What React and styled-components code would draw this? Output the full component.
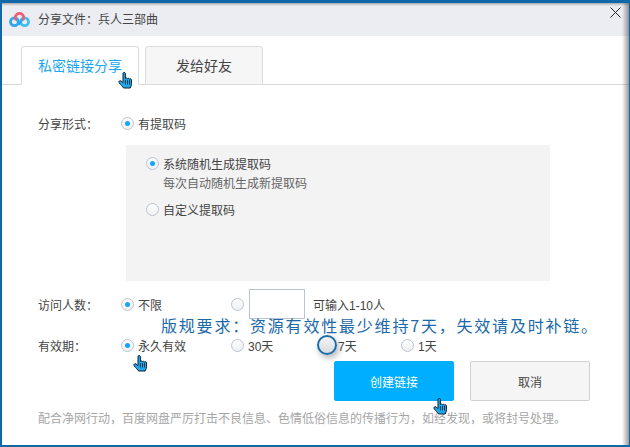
import React from 'react';
import styled, { createGlobalStyle } from 'styled-components';

const Global = createGlobalStyle`
  html, body { margin: 0; padding: 0; background: #fff; }
  #root { width: 630px; height: 447px; }
`;
const FONT = `"Noto Sans CJK SC", "Liberation Sans", sans-serif`;

const Win = styled.div`
  position: relative; width: 630px; height: 447px; box-sizing: border-box; overflow: hidden;
  background: #fff; font-family: "Liberation Sans", "Noto Sans CJK SC", sans-serif; font-size: 12px; color: #444;
  border-top: 3px solid #0f69a8; border-left: 2px solid #0f69a8; border-right: 1px solid #0f69a8; border-bottom: 2px solid #0f69a8;
  display: flex; flex-direction: column;
`;
const EdgeShade = styled.div`
  position: absolute; right: 0; top: 0; bottom: 0; width: 7px; pointer-events: none;
  background: linear-gradient(to right, rgba(80,80,80,0), rgba(70,70,70,.55));
`;
const TopShade = styled.div`
  position: absolute; left: 0; right: 0; top: 0; height: 3px; pointer-events: none;
  background: linear-gradient(to bottom, rgba(70,70,70,.4), rgba(70,70,70,0));
`;
const TitleBar = styled.div`
  height: 33px; flex: none; background: #ecedf2; display: flex; align-items: center; gap: 8px; padding: 0 8px 0 7px;
  font-size: 12px; color: #444;
`;
const TitleText = styled.span`padding-bottom: 2px;`;
const LogoMark = styled.svg`flex: none; margin-bottom: 1px;`;
const Close = styled.svg`margin-left: auto; margin-top: -15px;`;
const Tabs = styled.div`
  height: 39px; margin-top: 10px; flex: none; display: flex; gap: 6px; padding-left: 19px; border-bottom: 1px solid #d8d8d8; box-sizing: border-box;
`;
const Tab = styled.div`
  width: 118px; height: 39px; box-sizing: border-box; border: 1px solid #dcdcdc; border-radius: 3px 3px 0 0;
  display: flex; align-items: center; justify-content: center; font-size: 14px; padding-bottom: 2px;
  color: ${p => p.$active ? '#1ba7f0' : '#444'};
  background: ${p => p.$active ? '#fff' : '#f6f6f6'};
  border-bottom: ${p => p.$active ? '1px solid #fff' : '1px solid #dcdcdc'};
`;
const Body = styled.div`
  padding: 28px 0 0 36px; display: flex; flex-direction: column; flex: 1; color: #444;
`;
const Row = styled.div`display: flex; align-items: center; height: 20px;`;
const Label = styled.div`width: 83px; flex: none; font-size: 12px;`;
const Radio = styled.span`
  width: 13px; height: 13px; border-radius: 50%; flex: none; box-sizing: border-box; border: 1px solid #bcc4d0;
  background: linear-gradient(#fdfdfd, #eef0f4);
  display: inline-flex; align-items: center; justify-content: center; margin-right: 4px;
  &::after { content: ''; width: 5px; height: 5px; border-radius: 50%; background: ${p => p.$on ? '#12a5fa' : 'transparent'}; }
`;
const HoverRadio = styled(Radio)`
  width: 20px; height: 20px; margin: 0 1px 0 -9px; border: 2px solid #1b6ca8;
  background: linear-gradient(#f4f4f6, #d9dbe0); box-shadow: 2px 3px 6px rgba(0,0,0,.3);
`;
const Opt = styled.label`display: flex; align-items: center; width: ${p => p.$w ? p.$w + 'px' : 'auto'}; flex: none; font-size: 12px;`;
const GreyBox = styled.div`
  width: 424px; height: 136px; margin: 12px 0 0 88px; background: #f3f3f3; box-sizing: border-box; padding: 10px 0 0 20px;
  display: flex; flex-direction: column;
`;
const Hint = styled.div`padding-left: 17px; height: 20px; line-height: 20px; color: #666; font-size: 12px; margin: 2px 0 7px;`;
const VisitorRow = styled(Row)`margin-top: 8px; height: 30px;`;
const NumInput = styled.div`width: 56px; height: 30px; border: 1px solid #b9c4d6; box-sizing: border-box; margin: 0 8px 0 1px;`;
const ExpiryRow = styled(Row)`margin-top: 16px;`;
const Buttons = styled.div`display: flex; gap: 16px; margin: 6px 0 0 296px;`;
const Btn = styled.div`
  width: 120px; height: 40px; box-sizing: border-box; border-radius: 2px; display: flex; align-items: center; justify-content: center; font-size: 12px;
  background: ${p => p.$primary ? '#00aeff' : '#f5f5f5'};
  color: ${p => p.$primary ? '#fff' : '#444'};
  border: 1px solid ${p => p.$primary ? '#00aeff' : '#d0d0d0'};
`;
const Notice = styled.div`margin-top: 8px; font-size: 12px; color: #a6a6a6; white-space: nowrap;`;
const Overlay = styled.div`
  position: absolute; left: 159px; top: 311px; font-family: ${FONT}; font-size: 16px; letter-spacing: 1.8px; color: #1b69a8; white-space: nowrap; line-height: 22px;
`;
const HandWrap = styled.svg`position: absolute; left: ${p => p.$x}px; top: ${p => p.$y}px;`;

const Hand = ({ x, y }) => (
  <HandWrap $x={x} $y={y} width="16" height="17" viewBox="0 0 16 17">
    <path d="M5 1.400C5 .2 7.400 .2 7.400 1.400V6.500C8 5.700 9.300 5.800 9.500 6.800C10.100 6 11.300 6.100 11.500 7.100C12.200 6.500 13.500 6.800 13.500 8V11.500C13.500 13.200 12.900 14.500 12.200 16H5.600C4.600 14.500 3 13.200 1.200 10.800C.3 9.500 1.800 8 3.100 9C3.800 9.500 4.400 10 5 10.600Z"
      fill="#1fa8ec" stroke="#10202c" strokeWidth="1" strokeLinejoin="round" />
    <path d="M7.400 8v4.500M9.500 8v4.500M11.500 8v4.500" stroke="#10202c" strokeWidth=".8" />
  </HandWrap>
);

const Logo = () => (
  <LogoMark width="21" height="17" viewBox="0 0 21 17">
    <circle cx="5.400" cy="10.800" r="3.900" fill="none" stroke="#2fa6ee" strokeWidth="2.800" />
    <circle cx="15.600" cy="10.800" r="3.900" fill="none" stroke="#3cc0f0" strokeWidth="2.800" />
    <path d="M7.200 9.200A4.200 4.200 0 1 1 13.800 9.200" fill="none" stroke="#ee5f78" strokeWidth="2.800" />
    <path d="M7.800 8.600L10.500 12.500L13.200 8.600" fill="none" stroke="#2fa6ee" strokeWidth="2.200" />
  </LogoMark>
);

export default function App() {
  return (
    <>
      <Global />
      <Win>
        <TitleBar>
          <Logo />
          <TitleText>分享文件：兵人三部曲</TitleText>
          <Close width="11" height="11" viewBox="0 0 11 11"><path d="M.5.5l10 10M10.500.5l-10 10" stroke="#222" strokeWidth="1" fill="none" /></Close>
        </TitleBar>
        <Tabs>
          <Tab $active>私密链接分享</Tab>
          <Tab>发给好友</Tab>
        </Tabs>
        <Body>
          <Row>
            <Label>分享形式：</Label>
            <Opt><Radio $on />有提取码</Opt>
          </Row>
          <GreyBox>
            <Opt><Radio $on />系统随机生成提取码</Opt>
            <Hint>每次自动随机生成新提取码</Hint>
            <Opt><Radio />自定义提取码</Opt>
          </GreyBox>
          <VisitorRow>
            <Label>访问人数：</Label>
            <Opt $w={110}><Radio $on />不限</Opt>
            <Radio />
            <NumInput />
            <span>可输入1-10人</span>
          </VisitorRow>
          <ExpiryRow>
            <Label>有效期：</Label>
            <Opt $w={110}><Radio $on />永久有效</Opt>
            <Opt $w={95}><Radio />30天</Opt>
            <Opt $w={75}><HoverRadio />7天</Opt>
            <Opt><Radio />1天</Opt>
          </ExpiryRow>
          <Buttons>
            <Btn $primary>创建链接</Btn>
            <Btn>取消</Btn>
          </Buttons>
          <Notice>配合净网行动，百度网盘严厉打击不良信息、色情低俗信息的传播行为，如经发现，或将封号处理。</Notice>
        </Body>
        <Overlay>版规要求：资源有效性最少维持7天，失效请及时补链。</Overlay>
        <Hand x={116} y={69} />
        <Hand x={131} y={352} />
        <Hand x={431} y={395} />
        <EdgeShade />
        <TopShade />
      </Win>
    </>
  );
}
